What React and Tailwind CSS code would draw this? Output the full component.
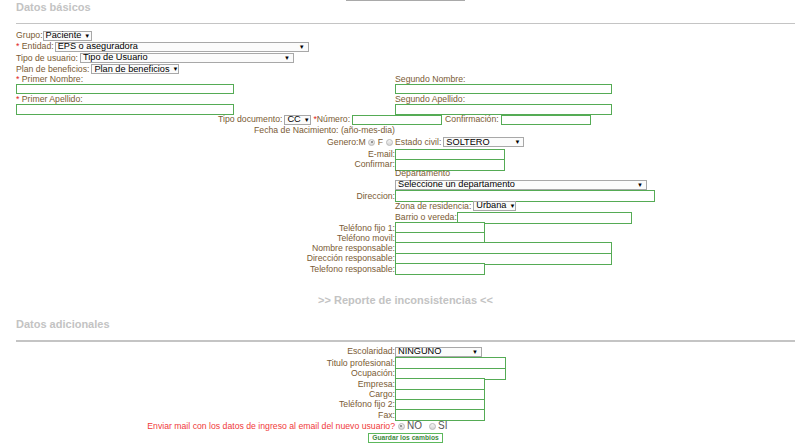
import React from "react";

const label = "text-[#7a5b34]";

function Sel({ className = "", children }) {
  return (
    <div
      className={`flex h-[10px] items-center justify-between border border-[#a8a8a8] bg-[#fbfbfb] pl-[2px] pr-[3px] text-[9.2px] leading-none text-black ${className}`}
    >
      <span className="whitespace-nowrap">{children}</span>
      <span className="ml-[3px] text-[6px] leading-none">▼</span>
    </div>
  );
}

function Inp({ className = "" }) {
  return (
    <input
      type="text"
      readOnly
      className={`h-full border border-[#55ab55] bg-white outline-none ${className}`}
    />
  );
}

function Radio({ checked = false }) {
  return (
    <span className="relative mx-[2.5px] inline-block h-[7px] w-[7px] shrink-0 rounded-full border border-[#b9b9b9] bg-gradient-to-b from-[#f6f6f6] to-[#d6d6d6]">
      {checked && <span className="absolute inset-[1.5px] rounded-full bg-[#7a7a7a]"></span>}
    </span>
  );
}

function Req() {
  return <span className="text-[#e02424]">* </span>;
}

function Row({ h, lbl, children }) {
  return (
    <div className={`grid grid-cols-[395px_1fr] items-center ${h}`}>
      <div className={`flex h-full items-center justify-end whitespace-nowrap ${label}`}>{lbl}</div>
      <div className="flex h-full items-center">{children}</div>
    </div>
  );
}

export default function App() {
  return (
    <div
      className="h-[446px] w-[800px] overflow-hidden bg-white text-[8.7px] leading-none"
      style={{ fontFamily: '"Liberation Sans", Arial, sans-serif' }}
    >
      {/* cabecera */}
      <div className="h-[22.5px]">
        <div className="ml-[346px] h-[1px] w-[119px] bg-[#a9a9a9]"></div>
        <div className="mt-[1px] pl-[16px] text-[11px] font-bold leading-[11px] text-[#c3c3c3]">Datos básicos</div>
      </div>
      <div className="ml-[16px] mr-[5px] h-[1.5px] bg-[#c4c4c4]"></div>

      {/* selects */}
      <div className={`mt-[6px] pl-[16px] ${label}`}>
        <div className="flex h-[11.2px] items-center">
          <span>Grupo:</span>
          <Sel className="w-[49px]">Paciente</Sel>
        </div>
        <div className="flex h-[11.2px] items-center">
          <span className="mr-[1px]"><Req />Entidad:</span>
          <Sel className="w-[254px]">EPS o aseguradora</Sel>
        </div>
        <div className="flex h-[11.2px] items-center">
          <span className="mr-[2px]">Tipo de usuario:</span>
          <Sel className="w-[214px]">Tipo de Usuario</Sel>
        </div>
        <div className="flex h-[11.2px] items-center">
          <span className="mr-[2px]">Plan de beneficios:</span>
          <Sel className="w-[88px]">Plan de beneficios</Sel>
        </div>
      </div>

      {/* nombres */}
      <div className={`grid grid-cols-[379px_1fr] pl-[16px] ${label}`}>
        <div className="flex h-[9px] items-end"><span><Req />Primer Nombre:</span></div>
        <div className="flex h-[9px] items-end">Segundo Nombre:</div>
        <div className="h-[10.6px]"><Inp className="w-[218px]" /></div>
        <div className="h-[10.6px]"><Inp className="w-[217px]" /></div>
        <div className="flex h-[10px] items-end pb-[0.5px]"><span><Req />Primer Apellido:</span></div>
        <div className="flex h-[10px] items-end pb-[0.5px]">Segundo Apellido:</div>
        <div className="h-[10.2px]"><Inp className="w-[218px]" /></div>
        <div className="h-[10.2px]"><Inp className="w-[217px]" /></div>
      </div>

      {/* documento */}
      <div className={`flex h-[10.2px] items-center pl-[218px] ${label}`}>
        <span className="mr-[2px]">Tipo documento:</span>
        <Sel className="w-[27px]">CC</Sel>
        <span className="ml-[2px] mr-[2px]"><span className="text-[#e02424]">*</span>Número:</span>
        <Inp className="w-[90px]" />
        <span className="ml-[3px] mr-[2px]">Confirmación:</span>
        <Inp className="w-[90px]" />
      </div>

      <Row h="h-[11px]" lbl="Fecha de Nacimiento: (año-mes-dia)" />

      <Row
        h="h-[13px]"
        lbl={
          <>
            <span>Genero:M</span>
            <Radio checked />
            <span>F</span>
            <Radio />
          </>
        }
      >
        <span className={`mr-[2px] whitespace-nowrap ${label}`}>Estado civil:</span>
        <Sel className="w-[81px]">SOLTERO</Sel>
      </Row>

      <Row h="h-[10px]" lbl="E-mail:"><Inp className="w-[110px]" /></Row>
      <Row h="h-[10px]" lbl="Confirmar:"><Inp className="w-[110px]" /></Row>
      <Row h="h-[10.6px]" lbl="">
        <span className={`self-end pb-[1.5px] ${label}`}>Departamento</span>
      </Row>
      <Row h="h-[10.7px]" lbl=""><Sel className="w-[252px]">Seleccione un departamento</Sel></Row>
      <Row h="h-[10.3px]" lbl="Direccion:"><Inp className="w-[260px]" /></Row>
      <Row h="h-[11.3px]" lbl="">
        <span className={`mr-[2px] whitespace-nowrap ${label}`}>Zona de residencia:</span>
        <Sel className="w-[43px]">Urbana</Sel>
      </Row>
      <Row h="h-[10.3px]" lbl="">
        <span className={`whitespace-nowrap ${label}`}>Barrio o vereda:</span>
        <Inp className="w-[175px]" />
      </Row>
      <Row h="h-[10.3px]" lbl="Teléfono fijo 1:"><Inp className="w-[90px]" /></Row>
      <Row h="h-[10.3px]" lbl="Teléfono movil:"><Inp className="w-[90px]" /></Row>
      <Row h="h-[10.3px]" lbl="Nombre responsable:"><Inp className="w-[217px]" /></Row>
      <Row h="h-[10.4px]" lbl="Dirección responsable:"><Inp className="w-[217px]" /></Row>
      <Row h="h-[10.4px]" lbl="Telefono responsable:"><Inp className="w-[90px]" /></Row>

      {/* reporte */}
      <div className="mt-[21px] pl-[11px] text-center text-[11px] font-bold leading-[11px] text-[#c3c3c3]">
        &gt;&gt; Reporte de inconsistencias &lt;&lt;
      </div>

      <div className="mt-[13px] pl-[16px] text-[11px] font-bold leading-[11px] text-[#c3c3c3]">Datos adicionales</div>
      <div className="ml-[16px] mr-[5px] mt-[10.5px] h-[1.5px] bg-[#c4c4c4]"></div>

      <div className="mt-[4.5px]">
        <Row h="h-[11.3px]" lbl="Escolaridad:"><Sel className="w-[87px]">NINGUNO</Sel></Row>
        <Row h="h-[10.4px]" lbl="Titulo profesional:"><Inp className="w-[111px]" /></Row>
        <Row h="h-[10.3px]" lbl="Ocupación:"><Inp className="w-[111px]" /></Row>
        <Row h="h-[10.5px]" lbl="Empresa:"><Inp className="w-[90px]" /></Row>
        <Row h="h-[10.3px]" lbl="Cargo:"><Inp className="w-[90px]" /></Row>
        <Row h="h-[10.5px]" lbl="Teléfono fijo 2:"><Inp className="w-[90px]" /></Row>
        <Row h="h-[10.3px]" lbl="Fax:"><Inp className="w-[90px]" /></Row>
        <Row
          h="h-[13px]"
          lbl={<span className="text-[#f03a3a]">Enviar mail con los datos de ingreso al email del nuevo usuario?</span>}
        >
          <Radio checked />
          <span className="text-[10px] text-[#555]">NO</span>
          <span className="w-[4px]"></span>
          <Radio />
          <span className="text-[10px] text-[#555]">SI</span>
        </Row>
        <div className="ml-[368px] flex h-[10.5px] w-[75px] items-center justify-center border border-[#5cb85c] bg-white text-[6.7px] font-bold text-[#3d8b3d]">
          Guardar los cambios
        </div>
      </div>
    </div>
  );
}
